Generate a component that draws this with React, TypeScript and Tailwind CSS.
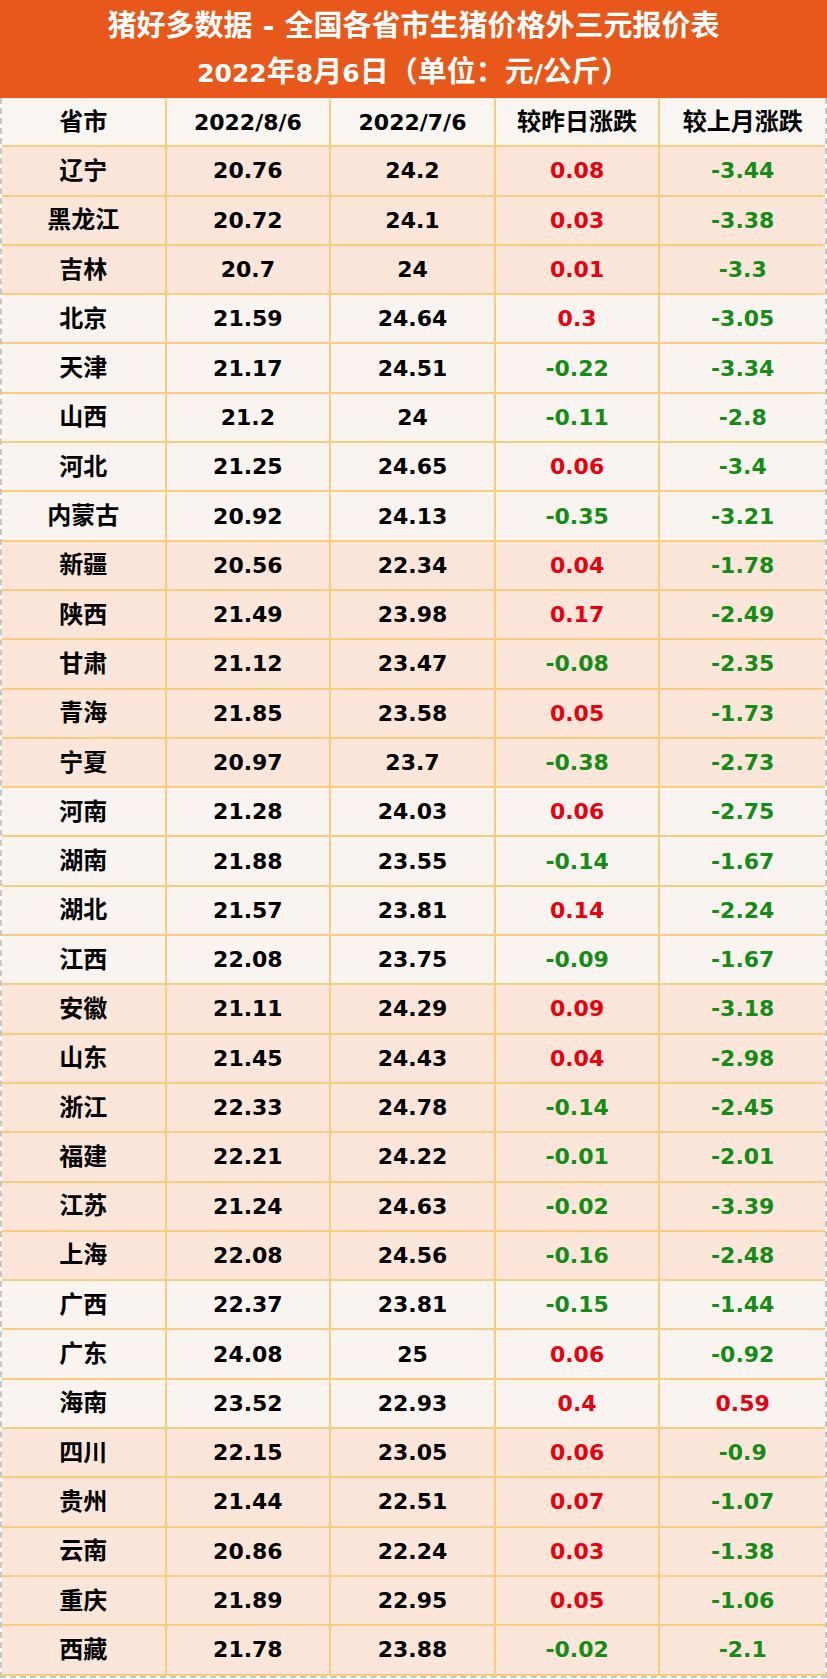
const rows: [string, string, string, string, string][] = [
  ["辽宁", "20.76", "24.2", "0.08", "-3.44"],
  ["黑龙江", "20.72", "24.1", "0.03", "-3.38"],
  ["吉林", "20.7", "24", "0.01", "-3.3"],
  ["北京", "21.59", "24.64", "0.3", "-3.05"],
  ["天津", "21.17", "24.51", "-0.22", "-3.34"],
  ["山西", "21.2", "24", "-0.11", "-2.8"],
  ["河北", "21.25", "24.65", "0.06", "-3.4"],
  ["内蒙古", "20.92", "24.13", "-0.35", "-3.21"],
  ["新疆", "20.56", "22.34", "0.04", "-1.78"],
  ["陕西", "21.49", "23.98", "0.17", "-2.49"],
  ["甘肃", "21.12", "23.47", "-0.08", "-2.35"],
  ["青海", "21.85", "23.58", "0.05", "-1.73"],
  ["宁夏", "20.97", "23.7", "-0.38", "-2.73"],
  ["河南", "21.28", "24.03", "0.06", "-2.75"],
  ["湖南", "21.88", "23.55", "-0.14", "-1.67"],
  ["湖北", "21.57", "23.81", "0.14", "-2.24"],
  ["江西", "22.08", "23.75", "-0.09", "-1.67"],
  ["安徽", "21.11", "24.29", "0.09", "-3.18"],
  ["山东", "21.45", "24.43", "0.04", "-2.98"],
  ["浙江", "22.33", "24.78", "-0.14", "-2.45"],
  ["福建", "22.21", "24.22", "-0.01", "-2.01"],
  ["江苏", "21.24", "24.63", "-0.02", "-3.39"],
  ["上海", "22.08", "24.56", "-0.16", "-2.48"],
  ["广西", "22.37", "23.81", "-0.15", "-1.44"],
  ["广东", "24.08", "25", "0.06", "-0.92"],
  ["海南", "23.52", "22.93", "0.4", "0.59"],
  ["四川", "22.15", "23.05", "0.06", "-0.9"],
  ["贵州", "21.44", "22.51", "0.07", "-1.07"],
  ["云南", "20.86", "22.24", "0.03", "-1.38"],
  ["重庆", "21.89", "22.95", "0.05", "-1.06"],
  ["西藏", "21.78", "23.88", "-0.02", "-2.1"],
]

// light rows by region group: north (4-8), central (14-17), south (24-26)
const lightRows = new Set([3, 4, 5, 6, 7, 13, 14, 15, 16, 23, 24, 25])

function change(v: string) {
  return v.startsWith("-") ? "text-[#158c17]" : "text-[#e8000f]"
}

function Cell({ children, last, className = "" }: { children: React.ReactNode; last?: boolean; className?: string }) {
  return (
    <div
      className={`flex items-center justify-center border-b-2 border-[#f9cd80] font-bold ${last ? "" : "border-r-2"} ${className}`}
    >
      {children}
    </div>
  )
}

export default function App() {
  return (
    <div className="w-[827px] bg-white font-['DejaVu_Sans','Noto_Sans_CJK_SC',sans-serif] text-black">
      <div className="bg-[#e8581a] text-center font-bold text-white text-[29px]">
        <div className="h-[49px] leading-[52px]">猪好多数据 - 全国各省市生猪价格外三元报价表</div>
        <div className="h-[49px] leading-[46px]">
          <span className="text-[25px]">2022</span>年<span className="text-[25px]">8</span>月
          <span className="text-[25px]">6</span>日（单位：元<span className="text-[25px]">/</span>公斤）
        </div>
      </div>
      <div className="border-x-2 border-b-2 border-dashed border-[#c9c6c4]">
        <div className="grid h-[49.3px] grid-cols-5 border-t border-[#ece7e2] bg-[#f9f5f1]">
          <Cell className="text-[24px]">省市</Cell>
          <Cell className="text-[22px]">2022/8/6</Cell>
          <Cell className="text-[22px]">2022/7/6</Cell>
          <Cell className="text-[24px]">较昨日涨跌</Cell>
          <Cell className="text-[24px]" last>较上月涨跌</Cell>
        </div>
        {rows.map(([name, a, b, d, m], i) => (
          <div
            key={name}
            className={`grid h-[49.3px] grid-cols-5 ${lightRows.has(i) ? "bg-[#faf4f0]" : "bg-[#fce5d9]"}`}
          >
            <Cell className="text-[24px]">{name}</Cell>
            <Cell className="text-[22px]">{a}</Cell>
            <Cell className="text-[22px]">{b}</Cell>
            <Cell className={`text-[22px] ${change(d)}`}>{d}</Cell>
            <Cell className={`text-[22px] ${change(m)}`} last>{m}</Cell>
          </div>
        ))}
      </div>
    </div>
  )
}
